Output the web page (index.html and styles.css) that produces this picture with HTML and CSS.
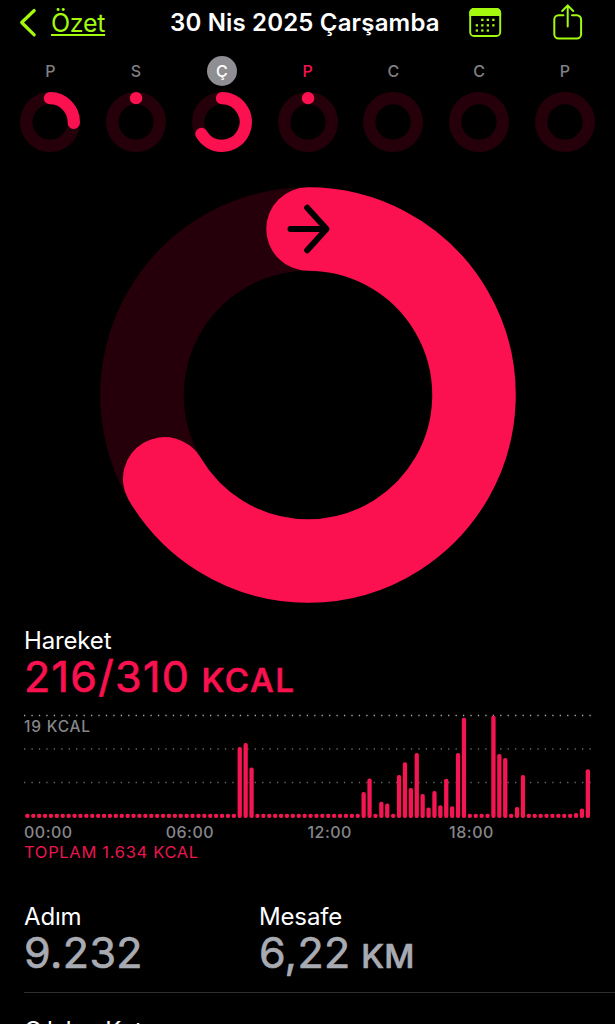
FILE: index.html
```html
<!DOCTYPE html>
<html lang="tr">
<head>
<meta charset="utf-8">
<title>Hareket</title>
<link rel="stylesheet" href="styles.css">
</head>
<body>
<main class="app">
  <header class="nav">
    <a class="back">
      <svg class="back-icon" width="18" height="30" viewBox="0 0 18 30"><path d="M15.2 2.5 2.7 14.5 15.2 26.8"/></svg>
      <span class="back-label">Özet</span>
    </a>
    <h1 class="title">30 Nis 2025 Çarşamba</h1>
    <svg class="calendar" width="33" height="30" viewBox="0 0 33 30">
      <rect class="line" x="1.2" y="1" width="30" height="27" rx="3.8"/>
      <path class="fill" d="M.3 8V4.8A4.7 4.7 0 0 1 5 .1h22.4a4.7 4.7 0 0 1 4.7 4.7V8z"/>
      <g class="fill">
        <rect x="12.2" y="10.7" width="2.3" height="2.3"/><rect x="17.7" y="10.7" width="2.3" height="2.3"/><rect x="23.2" y="10.7" width="2.3" height="2.3"/>
        <rect x="6.7" y="16.2" width="2.3" height="2.3"/><rect x="12.2" y="16.2" width="2.3" height="2.3"/><rect x="17.7" y="16.2" width="2.3" height="2.3"/><rect x="23.2" y="16.2" width="2.3" height="2.3"/>
        <rect x="6.7" y="21.4" width="2.3" height="2.3"/><rect x="12.2" y="21.4" width="2.3" height="2.3"/><rect x="17.7" y="21.4" width="2.3" height="2.3"/>
      </g>
    </svg>
    <svg class="share" width="30" height="36" viewBox="0 0 30 36">
      <path d="M10.400 11.200H5.600a4.300 4.300 0 0 0-4.300 4.300v14.800a4.300 4.300 0 0 0 4.300 4.300h18.200a4.300 4.300 0 0 0 4.300-4.300V15.500a4.300 4.300 0 0 0-4.300-4.300H19M14.700 22.500V1.500M9.200 7l5.500-5.600L20.200 7"/>
    </svg>
  </header>

  <section class="week" id="week"></section>

  <svg class="ring" width="416" height="416" viewBox="-208 -208 416 416">
    <circle class="track" r="166" stroke-width="83.500"/>
    <path class="progress" stroke-width="83.500" d="M0-166A166 166 0 1 1-143.300 83.800"/>
    <path class="arrow" d="M-17.500-166H18M-.8-187.300 18.500-166-.8-144.700"/>
  </svg>

  <section class="move">
    <h2 class="label">Hareket</h2>
    <p class="value move-value">216/310 <span class="unit">KCAL</span></p>
    <div class="chart">
      <svg class="plot" id="plot" width="591" height="108" viewBox="0 0 591 108"></svg>
      <span class="peak">19 KCAL</span>
    </div>
    <div class="hours"><span>00:00</span><span>06:00</span><span>12:00</span><span>18:00</span></div>
    <p class="total">TOPLAM 1.634 KCAL</p>
  </section>

  <section class="stats">
    <div class="stat"><h2 class="label">Adım</h2><p class="value steps">9.232</p></div>
    <div class="stat"><h2 class="label">Mesafe</h2><p class="value distance">6,22 <span class="unit">KM</span></p></div>
  </section>
  <section class="floors"><h2 class="label">Çıkılan Kat</h2></section>
</main>
<script src="app.js"></script>
</body>
</html>
```
FILE: styles.css
```css
* { box-sizing: border-box; margin: 0; padding: 0; }
html, body { background: #000; overflow: hidden; }
body { font-family: Inter, "Liberation Sans", sans-serif; color: #fff; }
svg { display: block; flex: none; }

.app { width: 615px; height: 1024px; overflow: hidden; }

.nav { display: flex; height: 56px; align-items: flex-start; color: #a4f90f; }
.back { display: flex; width: 170px; padding: 8px 0 0 18.500px; }
.back-icon { fill: none; stroke: #a4f90f; stroke-width: 3.200; stroke-linecap: round; stroke-linejoin: round; }
.back-label { margin-left: 14.500px; font-size: 25px; line-height: 30px; letter-spacing: -.3px; text-decoration: underline; text-decoration-thickness: 1.500px; text-underline-offset: 2px; }
.title { width: 299px; padding-top: 8px; font-size: 24px; font-weight: 600; line-height: 30px; letter-spacing: .17px; color: #fff; white-space: nowrap; }
.calendar { margin-top: 8px; }
.calendar .line { fill: none; stroke: #a4f90f; stroke-width: 1.900; }
.calendar .fill { fill: #a4f90f; }
.share { margin: 4px 0 0 50.500px; fill: none; stroke: #a4f90f; stroke-width: 2; stroke-linecap: round; stroke-linejoin: round; }

.week { display: grid; grid-template-columns: repeat(7, 85.750px); padding-left: 7.400px; height: 131px; }
.day { display: flex; flex-direction: column; align-items: center; gap: 6px; }
.day-name { width: 30px; height: 30px; border-radius: 50%; font-size: 16px; font-weight: 500; line-height: 31px; text-align: center; color: #808084; }
.day.selected .day-name { background: #8e8e93; color: #fff; }
.day.today .day-name { color: #fa114f; }

.track { fill: none; stroke: #25000b; }
.progress { fill: none; stroke: #fb1150; stroke-linecap: round; }
.arrow { fill: none; stroke: #000; stroke-width: 6; stroke-linecap: round; stroke-linejoin: round; }
.ring { margin-left: 100px; }

.label { font-size: 24px; font-weight: 400; line-height: 30px; letter-spacing: -.15px; }
.value { font-size: 43px; font-weight: 400; line-height: 42px; white-space: nowrap; -webkit-text-stroke: .7px currentColor; stroke-linejoin: round; }
.unit { font-size: 33px; font-weight: 500; }
.move { height: 298px; padding: 23px 0 0 24px; }
.move-value { color: #fa114f; letter-spacing: 1.300px; word-spacing: -2px; margin-top: -1px; }
.move-value .unit { letter-spacing: 1.800px; }
.chart { position: relative; height: 108px; margin-top: 12px; }
.peak { position: absolute; left: 0; top: 4px; font-size: 15.500px; font-weight: 500; line-height: 20px; letter-spacing: .8px; color: #86868a; }
.grid { stroke: #69696c; stroke-width: 1.300; stroke-dasharray: 1.300 6.140; }
.grid.top { stroke: #aaaaad; }
.bar { fill: #f41652; }
.hours { display: grid; grid-template-columns: repeat(4, 141.700px); margin-top: 1px; font-size: 16px; font-weight: 500; line-height: 20px; letter-spacing: .5px; color: #86868a; }
.total { font-size: 16.500px; line-height: 20px; letter-spacing: .68px; color: #e91650; }

.stats { display: grid; grid-template-columns: 235px 1fr; margin-left: 24px; height: 92px; padding-top: 1px; border-bottom: 1px solid #303032; }
.stats .value { margin-top: -1px; color: #a9abb3; letter-spacing: .4px; word-spacing: -2px; }
.floors { height: 31px; padding: 23px 0 0 24px; overflow: hidden; }
```
FILE: app.js
```js
const days = [
  { name: 'P', arc: .255 },
  { name: 'S', arc: .001 },
  { name: 'Ç', arc: .666, cls: 'selected' },
  { name: 'P', arc: .001, cls: 'today' },
  { name: 'C' }, { name: 'C' }, { name: 'P' }
];

function arcPath(r, fraction) {
  const a = fraction * Math.PI * 2;
  return `M0 ${-r}A${r} ${r} 0 ${fraction > .5 ? 1 : 0} 1 ${r * Math.sin(a)} ${-r * Math.cos(a)}`;
}

document.getElementById('week').innerHTML = days.map(d => `
  <div class="day ${d.cls || ''}">
    <span class="day-name">${d.name}</span>
    <svg width="60" height="60" viewBox="-30 -30 60 60">
      <circle class="track" r="23.8" stroke-width="12.3"/>
      ${d.arc ? `<path class="progress" stroke-width="12.3" d="${arcPath(23.8, d.arc)}"/>` : ''}
    </svg>
  </div>`).join('');

// Quarter-hour bar heights; every other slot shows the idle dot.
const heights = {
  36: 71, 37: 75, 38: 50.500, 57: 26, 58: 39.500, 60: 16.200, 61: 14.500,
  63: 43, 64: 55.700, 65: 30, 66: 65, 67: 24, 68: 10.500, 69: 27, 70: 12.700,
  71: 39.300, 72: 11.700, 73: 65, 74: 100.200, 79: 102.200, 80: 64, 81: 60,
  83: 11, 84: 43, 93: 5, 94: 9.500, 95: 48.700
};
const base = 105;
let marks = [2.500, 36, 69.500].map((y, i) =>
  `<path class="grid${i ? '' : ' top'}" d="M0 ${y}H567"/>`).join('');
for (let i = 0; i < 96; i++) {
  const h = heights[i] || 4.300;
  marks += `<rect class="bar" x="${(1.200 + i * 5.900).toFixed(2)}" y="${base - h}" width="4.300" height="${h}" rx="1.900"/>`;
}
document.getElementById('plot').innerHTML = marks;
```
